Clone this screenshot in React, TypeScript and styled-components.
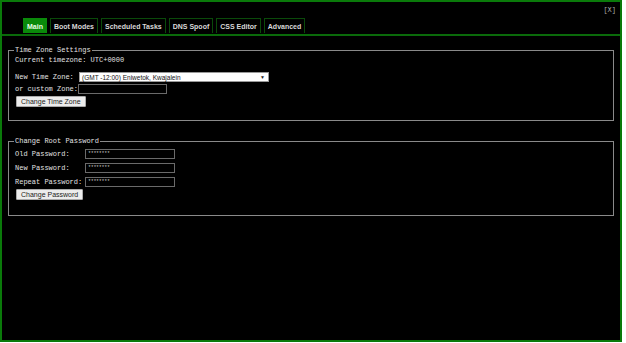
import React from 'react';
import styled, { createGlobalStyle } from 'styled-components';

const GlobalStyle = createGlobalStyle`
  html, body {
    margin: 0;
    padding: 0;
    background: #fff;
  }
`;

const Frame = styled.div`
  box-sizing: border-box;
  width: 622px;
  height: 342px;
  background: #000;
  border: 2px solid #0a7a0a;
  color: #e2e2e2;
  font-family: 'Liberation Mono', monospace;
  font-size: 7px;
`;

const TopRow = styled.div`
  display: flex;
  justify-content: flex-end;
  height: 14px;
  padding: 4px 4px 0 0;
  box-sizing: border-box;
`;

const Close = styled.span`
  color: #aaa;
  font-size: 7px;
  cursor: pointer;
`;

const TabBar = styled.div`
  display: flex;
  gap: 3px;
  padding: 2px 0 0 21px;
  border-bottom: 2px solid #0a6a0a;
`;

const Tab = styled.div<{ $active?: boolean }>`
  height: 15px;
  box-sizing: border-box;
  padding: 0 3px;
  display: flex;
  align-items: center;
  font-family: 'Liberation Sans', Arial, sans-serif;
  font-weight: bold;
  font-size: 7px;
  color: ${(p) => (p.$active ? '#e8ffe8' : '#d8d8d8')};
  background: ${(p) => (p.$active ? '#0a8a0a' : '#000')};
  border: 1px solid ${(p) => (p.$active ? '#0a8a0a' : '#0a4a0a')};
  border-bottom: none;
  margin-bottom: 1px;
`;

const Content = styled.div`
  padding: 10px 6px 0 6px;
  display: flex;
  flex-direction: column;
  gap: 16px;
`;

const Fieldset = styled.fieldset<{ $height: number }>`
  margin: 0;
  padding: 0 6px 0 6px;
  border: 1px solid #8a8a8a;
  height: ${(p) => p.$height}px;
  box-sizing: border-box;
`;

const Legend = styled.legend`
  padding: 0 1px;
  margin-left: -1px;
  color: #e2e2e2;
  font-size: 7px;
  line-height: 8px;
`;

const Line = styled.div<{ $mt?: number }>`
  display: flex;
  align-items: center;
  height: 12px;
  margin-top: ${(p) => p.$mt ?? 0}px;
  white-space: pre;
`;

const Label = styled.span<{ $w?: number }>`
  display: inline-block;
  width: ${(p) => (p.$w ? `${p.$w}px` : 'auto')};
`;

const Select = styled.div`
  box-sizing: border-box;
  width: 190px;
  height: 10px;
  background: #fff;
  border: 1px solid #999;
  color: #111;
  font-family: 'Liberation Sans', Arial, sans-serif;
  font-size: 6.5px;
  display: flex;
  align-items: center;
  justify-content: space-between;
  padding: 0 3px 0 2px;
`;

const Arrow = styled.span`
  font-size: 5px;
  color: #222;
`;

const TextInput = styled.div<{ $w: number }>`
  box-sizing: border-box;
  width: ${(p) => p.$w}px;
  height: 10px;
  background: #000;
  border: 1px solid #6a6a6a;
  color: #ccc;
  font-size: 5px;
  display: flex;
  align-items: center;
  padding-left: 2px;
  letter-spacing: -0.3px;
`;

const Button = styled.button`
  box-sizing: border-box;
  height: 11px;
  padding: 0 4px;
  margin: 1px 0 0 1px;
  background: #ececec;
  border: 1px solid #aaa;
  border-radius: 1px;
  color: #222;
  font-family: 'Liberation Sans', Arial, sans-serif;
  font-size: 7px;
  line-height: 9px;
`;

const tabs = ['Main', 'Boot Modes', 'Scheduled Tasks', 'DNS Spoof', 'CSS Editor', 'Advanced'];

export default function App() {
  return (
    <>
      <GlobalStyle />
      <Frame>
        <TopRow>
          <Close>[X]</Close>
        </TopRow>
        <TabBar>
          {tabs.map((t, i) => (
            <Tab key={t} $active={i === 0}>
              {t}
            </Tab>
          ))}
        </TabBar>
        <Content>
          <Fieldset $height={75}>
            <Legend>Time Zone Settings</Legend>
            <Line>Current timezone: UTC+0000</Line>
            <Line $mt={5}>
              <Label $w={64}>New Time Zone:</Label>
              <Select>
                <span>(GMT -12:00) Eniwetok, Kwajalein</span>
                <Arrow>▼</Arrow>
              </Select>
            </Line>
            <Line>
              <Label>or custom Zone:</Label>
              <TextInput $w={89} />
            </Line>
            <Button>Change Time Zone</Button>
          </Fieldset>
          <Fieldset $height={79}>
            <Legend>Change Root Password</Legend>
            <Line $mt={3}>
              <Label $w={70}>Old Password:</Label>
              <TextInput $w={90}>********</TextInput>
            </Line>
            <Line $mt={2}>
              <Label $w={70}>New Password:</Label>
              <TextInput $w={90}>********</TextInput>
            </Line>
            <Line $mt={2}>
              <Label $w={70}>Repeat Password:</Label>
              <TextInput $w={90}>********</TextInput>
            </Line>
            <Button>Change Password</Button>
          </Fieldset>
        </Content>
      </Frame>
    </>
  );
}
